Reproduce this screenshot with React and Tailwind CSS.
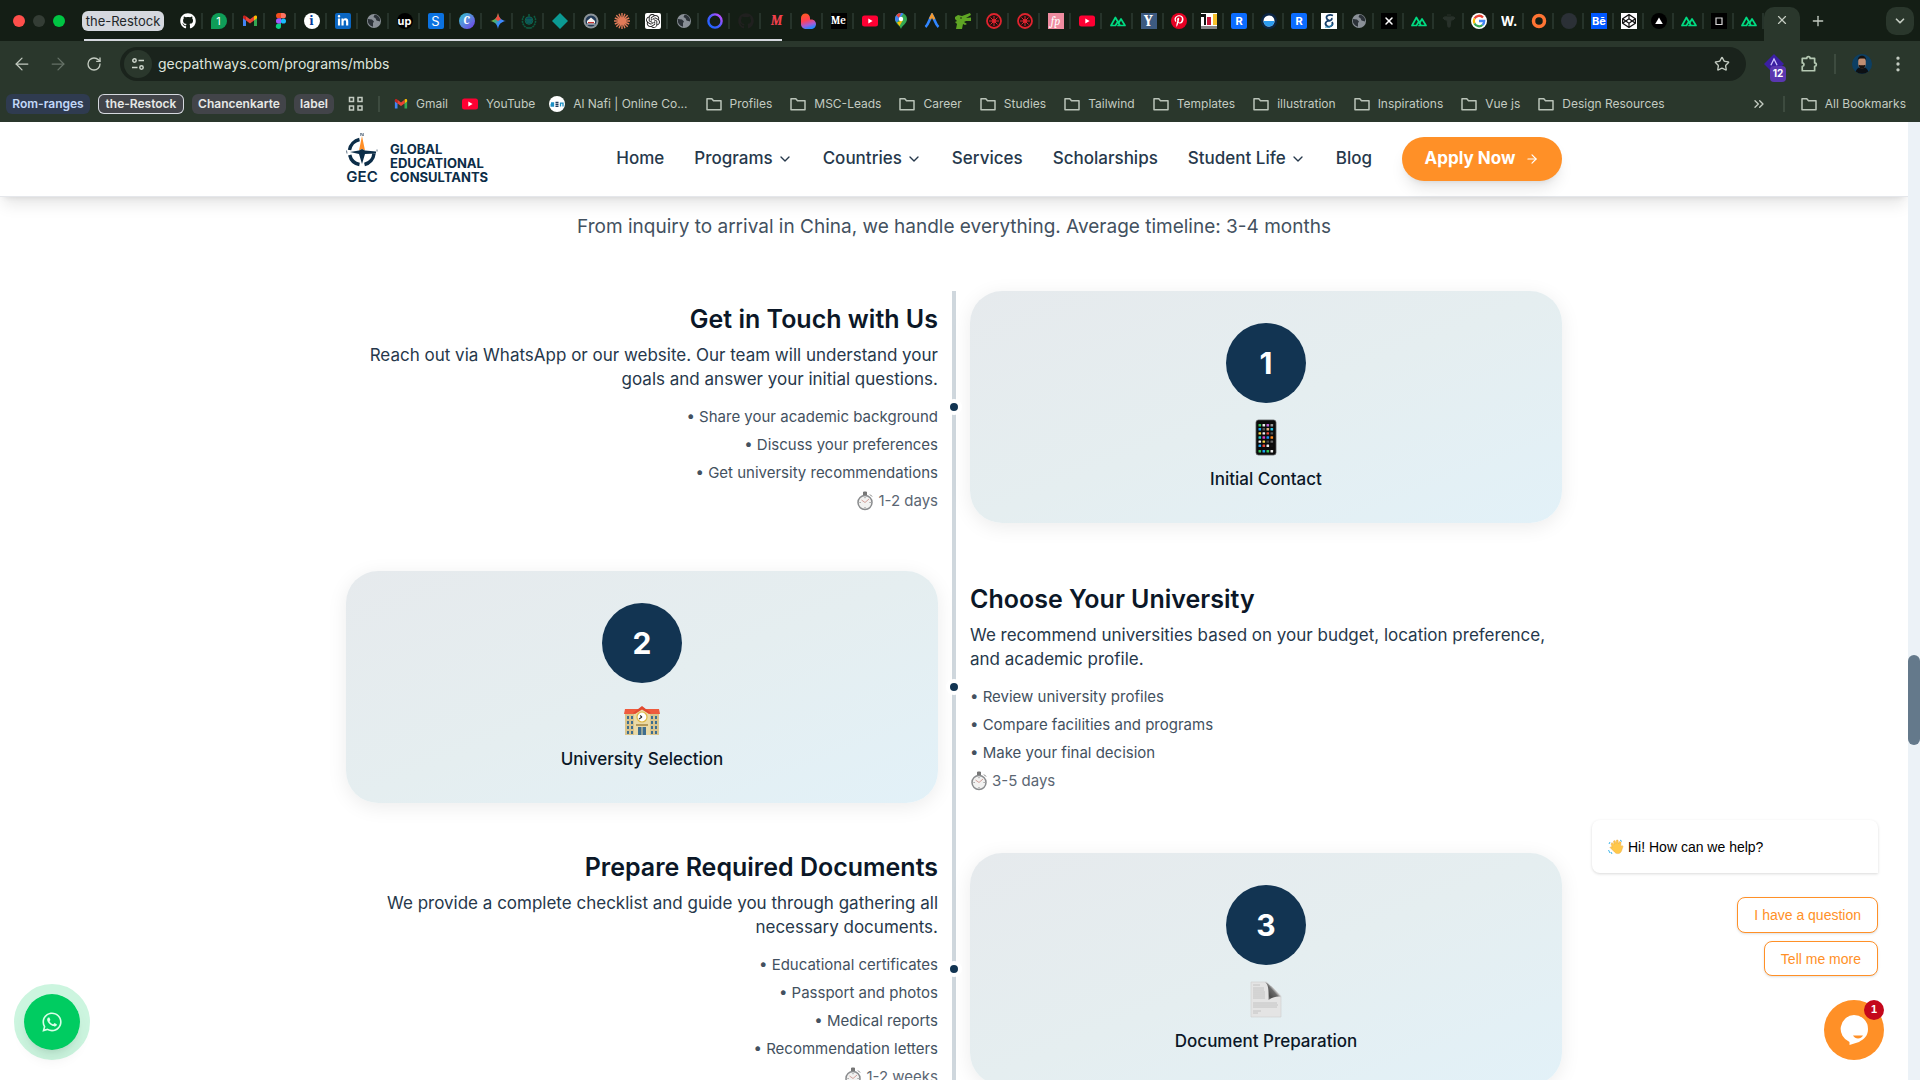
import React from "react";
import { FaGithub, FaLinkedinIn, FaPinterestP, FaCodepen, FaWhatsapp } from "react-icons/fa";
import { SiOpenai } from "react-icons/si";
import { ArrowLeft, ArrowRight, RotateCw, Star, ChevronDown, Plus, X, MoreVertical, ChevronsRight } from "lucide-react";

const Svg = ({ children, box = "0 0 16 16", className = "size-4" }) => (
  <svg viewBox={box} className={className} aria-hidden="true">{children}</svg>
);

/* A square or round favicon carrying one or two characters. */
const Mark = ({ className = "", children }) => (
  <span className={"flex size-4 items-center justify-center overflow-hidden text-[11px] leading-4 font-bold text-white " + className}>{children}</span>
);

const Gmail = ({ className }) => (
  <Svg className={className}>
    <path d="M1 3.5V13h3V7.2z" fill="#4285f4" />
    <path d="M15 3.5V13h-3V7.2z" fill="#34a853" />
    <path d="M1 3.6C1 2.5 2.4 2 3.3 2.7L4 3.2v4.2L1 5.2z" fill="#c5221f" />
    <path d="M15 3.6c0-1.1-1.4-1.6-2.3-.9l-.7.5v4.2l3-2.2z" fill="#fbbc04" />
    <path d="M4 3.2l4 3 4-3v4.2l-4 3-4-3z" fill="#ea4335" />
  </Svg>
);
const YouTube = () => (
  <Svg><rect y="2.5" width="16" height="11" rx="2.5" fill="#ff0033" /><path d="M6.3 5.6v4.8L10.6 8z" fill="#fff" /></Svg>
);
const Figma = () => (
  <Svg>
    <path d="M5.7 0H8v5.3H5.7a2.65 2.65 0 010-5.3z" fill="#f24e1e" />
    <path d="M8 0h2.3a2.65 2.65 0 010 5.3H8z" fill="#ff7262" />
    <path d="M5.7 5.3H8v5.4H5.7a2.7 2.7 0 010-5.4z" fill="#a259ff" />
    <circle cx="10.4" cy="8" r="2.6" fill="#1abcfe" />
    <path d="M5.7 10.7H8v2.6a2.6 2.6 0 11-2.3-2.6z" fill="#0acf83" />
  </Svg>
);
const Globe = () => (
  <Svg>
    <circle cx="8" cy="8" r="7" fill="#8a9097" />
    <path d="M2 6l4 .5 2 2-1 1.5v3.8A6.5 6.5 0 012 6zM8.5 1.8l-1 2.2 2 1.2 1 2.3 3.5 1V6c-.6-2.5-2.8-4.2-5.5-4.2z" fill="#2c3238" />
  </Svg>
);
const Nuxt = () => (
  <Svg><path d="M1 12.5h4.5L8 8.2M1 12.5L5.4 4.5 10 12.5H8M10 12.5h5L11 6 8.6 10" fill="none" stroke="#00dc82" strokeWidth="1.7" strokeLinejoin="round" strokeLinecap="round" /></Svg>
);
const Wheel = () => (
  <Svg>
    <circle cx="8" cy="8" r="7" fill="#23100f" stroke="#e0232e" strokeWidth="1.8" />
    <circle cx="8" cy="8" r="2" fill="#e0232e" />
    <path d="M8 3v10M3 8h10M4.5 4.5l7 7M11.5 4.5l-7 7" stroke="#e0232e" strokeWidth="1" />
  </Svg>
);
const Gemini = () => (
  <Svg>
    <defs><linearGradient id="gem" x1="0" x2="1" y1=".2" y2=".8"><stop stopColor="#f5b400" /><stop offset=".35" stopColor="#49b36b" /><stop offset=".6" stopColor="#3689ff" /><stop offset="1" stopColor="#5b8dff" /></linearGradient></defs>
    <path d="M8 0c.7 4.5 3 7.3 8 8-5 .7-7.3 3.5-8 8-.7-4.5-3-7.3-8-8 5-.7 7.3-3.5 8-8z" fill="url(#gem)" />
    <path d="M8 0c.5 3 1.5 5 3.2 6.3L8 8 5 6C6.9 4.7 7.6 2.7 8 0z" fill="#f04b3f" />
  </Svg>
);
const Wreath = () => (
  <Svg>
    <path d="M3 3C0 7 1.5 13 6 15M13 3c3 4 1.5 10-3 12" fill="none" stroke="#0d5a41" strokeWidth="1.6" strokeDasharray="2 .6" />
    <circle cx="8" cy="7.5" r="3.8" fill="#0c3d58" stroke="#0d6a4b" />
    <path d="M5 7h6M5.5 9h5M8 1v2M6 15h4" stroke="#0d7a57" />
  </Svg>
);
const Badge = () => (
  <Svg>
    <circle cx="8" cy="8" r="7.5" fill="#8c9499" /><circle cx="8" cy="8" r="5.5" fill="#223a57" />
    <path d="M4 8l4-3.5L12 8v2H4z" fill="#f4f1ee" /><path d="M5 9h6v1.5H5z" fill="#c2322f" /><path d="M4 11h8" stroke="#e6e6e6" />
  </Svg>
);
const Claude = () => (
  <Svg><path d="M8 0v16M0 8h16M2.3 2.3l11.4 11.4M13.7 2.3L2.3 13.7M5 .8l6 14.4M11 .8L5 15.2M.8 5l14.4 6M15.2 5L.8 11" stroke="#e07a58" strokeWidth="1.4" /></Svg>
);
const Ring = () => (
  <Svg>
    <defs><linearGradient id="ring" x1="0" y1="1" x2="1" y2="0"><stop stopColor="#1467ff" /><stop offset=".5" stopColor="#4b5bff" /><stop offset="1" stopColor="#d64bff" /></linearGradient></defs>
    <circle cx="8" cy="8" r="6.6" fill="none" stroke="url(#ring)" strokeWidth="2.4" />
  </Svg>
);
const Blob = () => (
  <Svg>
    <defs><linearGradient id="blob" x1=".2" y1="0" x2=".5" y2="1"><stop stopColor="#ff5a1f" /><stop offset=".45" stopColor="#ff4056" /><stop offset=".75" stopColor="#a55bd8" /><stop offset="1" stopColor="#2487ff" /></linearGradient></defs>
    <path d="M1 5a4.5 4.5 0 019 0v1.5c4-.7 6 2 6 4.5 0 3-2.3 5-5 5H6c-3 0-5-2.3-5-5z" fill="url(#blob)" />
  </Svg>
);
const Pin = () => (
  <Svg>
    <path d="M8 16C7 12.5 2 10.5 2 6a6 6 0 0112 0c0 4.5-5 6.5-6 10z" fill="#34a853" />
    <path d="M2 6a6 6 0 018.5-5.5L4 9.5C2.8 8.5 2 7.5 2 6z" fill="#4285f4" />
    <path d="M3.3 2.2A6 6 0 018 0L6 5z" fill="#ea4335" /><path d="M4 9.5L10 7l-3.5 6z" fill="#fbbc04" />
    <circle cx="8" cy="6" r="2.2" fill="#fff" />
  </Svg>
);
const Peak = () => (
  <Svg><path d="M1.5 14C4.5 11.5 5 7 8 2c3 5 3.5 9.5 6.5 12" fill="none" stroke="#3186ff" strokeWidth="2.6" /><path d="M6 6l2-4 2.2 4.3" fill="none" stroke="#f79a2c" strokeWidth="2.4" /></Svg>
);
const Dino = () => (
  <Svg><path d="M0 4l3-2 4 1 8-3 1 2-5 3 5-.5V8l-5 0L9 9l3 2-2 1-2-1-1 5H1l1-5-2-2 2-1-2-2z" fill="#5fa524" /><circle cx="6" cy="5" r=".8" fill="#17210f" /></Svg>
);
const Columns = () => (
  <Svg><path fill="#fff" d="M0 0h16v16H0z" /><path d="M0 1h5v11H3V4H0z" fill="#111" /><path d="M6 4h4v8H6z" fill="#c5163a" /><path d="M12 1h4v11h-4z" fill="#f8c12c" /><path d="M0 13h16v3H0z" fill="#87898b" /></Svg>
);
const Drop = () => (
  <Svg><circle cx="8" cy="8" r="8" fill="#0b2545" /><circle cx="8" cy="8" r="5.5" fill="#fff" /><path d="M2.5 8h11a5.5 5.5 0 01-11 0z" fill="#2c9cf0" /></Svg>
);
const Google = () => (
  <Svg>
    <circle cx="8" cy="8" r="8" fill="#fff" />
    <g fill="none" strokeWidth="2.3"><path d="M12 4.5A5.2 5.2 0 003.5 5.5" stroke="#ea4335" /><path d="M3.5 5.5a5.2 5.2 0 000 5" stroke="#fbbc05" /><path d="M3.5 10.5a5.2 5.2 0 008 1.5" stroke="#34a853" /><path d="M11.5 12A5.2 5.2 0 0013.2 8H8" stroke="#4285f4" /></g>
  </Svg>
);
const Curl = () => (
  <Svg><path fill="#fff" d="M0 0h16v16H0z" /><path d="M12 2.5C8 1 4 3 6 6s6 1 4.5-1M9 8c-4-1-6 3-3 5s7-1 5-4" fill="none" stroke="#17406b" strokeWidth="1.8" /><path d="M4 14c4 1 7-1 7-3" stroke="#2594c4" fill="none" /></Svg>
);
const Faint = () => (
  <Svg><path d="M2 5c2-2 3-1 6-1s4-1 6 1c-1 2-3 2-4 2l-1 7H7L6 7C5 7 3 7 2 5zM6 2h4" fill="#28312a" stroke="#28312a" /></Svg>
);
const AlNafi = () => (
  <Svg><circle cx="8" cy="8" r="8" fill="#fff" /><g fill="none" stroke="#1c8fc4" strokeWidth="1.3"><path d="M2 7h2.5v3H2.2V8.5h2M11.5 10.5V7.2H14v3.3" /><path d="M6.5 6.5h3M6.5 8.5h3M6.5 10.3h3" stroke="#203a5c" /></g></Svg>
);
const Chat1 = () => (
  <span className="flex size-4 items-center justify-center rounded-full rounded-bl-xs bg-[#0f9d58] text-[11px] leading-4 text-white">1</span>
);

const groupTabs = [
  <FaGithub className="size-4 text-white" />, <Chat1 />, <Gmail />, <Figma />,
  <Mark className="rounded-full bg-white font-serif text-[14px] !text-[#003a9b]">i</Mark>,
  <Mark className="rounded-xs bg-[#0a66c2]"><FaLinkedinIn className="size-3" /></Mark>,
  <Globe />,
  <Mark className="rounded-full bg-black text-[9px]">up</Mark>,
  <Mark className="rounded-xs bg-[#0b72e0] text-[13px] !font-normal">S</Mark>,
  <Mark className="rounded-full bg-linear-to-br from-[#00c4cc] to-[#6d2ae8] font-serif italic">C</Mark>,
  <Gemini />, <Wreath />,
  <Svg><path d="M8 0l8 8-8 8-8-8z" fill="#0b9a93" /></Svg>,
  <Badge />, <Claude />,
  <Mark className="rounded-xs bg-white"><SiOpenai className="size-3.5 text-[#222]" /></Mark>,
  <Globe />, <Ring />, <FaGithub className="size-4 text-[#20201f]" />,
  <Mark className="font-serif text-[14px] italic !text-[#f0404c]">M</Mark>,
];
const looseTabs = [
  <Blob />,
  <Mark className="bg-black font-serif">Me</Mark>,
  <YouTube />, <Pin />, <Peak />, <Dino />, <Wheel />, <Wheel />,
  <Mark className="bg-[#f08ca0] font-serif text-[12px] italic !font-normal">fp</Mark>,
  <YouTube />, <Nuxt />,
  <Mark className="bg-[#3c5a80] font-serif text-[15px]">Y</Mark>,
];
const narrowTabs = [
  <Mark className="rounded-full bg-[#e60023]"><FaPinterestP className="size-3" /></Mark>,
  <Columns />,
  <Mark className="rounded-xs bg-[#0b6cff]">R</Mark>,
  <Drop />,
  <Mark className="rounded-xs bg-[#0b6cff]">R</Mark>,
  <Curl />, <Globe />,
  <Mark className="bg-black"><X className="size-3" strokeWidth={3} /></Mark>,
  <Nuxt />, <Faint />, <Google />,
  <Mark className="text-[13px]">W.</Mark>,
  <Svg><circle cx="8" cy="8" r="5.5" fill="none" stroke="#ff7433" strokeWidth="3.5" /></Svg>,
  <Svg><circle cx="8" cy="8" r="8" fill="#2b3036" /></Svg>,
  <Mark className="bg-[#0057ff] text-[9px]">Bē</Mark>,
  <Mark className="bg-white"><FaCodepen className="size-3.5 text-[#111]" /></Mark>,
  <Svg><circle cx="8" cy="8" r="8" fill="#000" /><path d="M8 4.5l3.8 6.5H4.2z" fill="#fff" /></Svg>,
  <Nuxt />,
  <Svg><path fill="#000" d="M0 0h16v16H0z" /><path d="M5 5h6v6.5H5z" fill="none" stroke="#d8d8d8" strokeWidth="1.2" /></Svg>,
  <Nuxt />,
];

const Tab = ({ children, className }) => (
  <div className={"relative flex h-4 items-center justify-center " + className}>
    {children}
    <span className="absolute right-0 h-4 w-0.5 bg-[#26332a]" />
  </div>
);

const Folder = () => (
  <Svg className="size-4 shrink-0"><path d="M1 2.7h4.8l1.7 2H15v9H1z" fill="none" stroke="#b9c3b8" strokeWidth="1.5" strokeLinejoin="round" /></Svg>
);
const folders = ["Profiles", "MSC-Leads", "Career", "Studies", "Tailwind", "Templates", "illustration", "Inspirations", "Vue js", "Design Resources"];

const Bookmark = ({ icon, children }) => (
  <a href="#" className="flex shrink-0 items-center gap-2">{icon}<span>{children}</span></a>
);

const Browser = () => (
  <div className="shrink-0 bg-[#2a372c] font-['Inter',sans-serif] text-xs text-[#c3cbc1]">
    <div className="flex h-[41px] items-center bg-[#141e15] pr-1.5">
      <div className="flex w-[82px] gap-2 pl-[13px]">
        <span className="size-3 rounded-full bg-[#ff4f4b]" />
        <span className="size-3 rounded-full bg-[#343d35]" />
        <span className="size-3 rounded-full bg-[#00c543]" />
      </div>
      <div className="flex h-full flex-col justify-between">
        <div className="flex items-center pt-[11px]">
          <button className="h-5 w-[82px] rounded-md bg-[#d5d8de] text-[13px] leading-5 text-[#232628]">the-Restock</button>
          <div className="ml-2 flex">{groupTabs.map((t, i) => <Tab key={i} className="w-[31px]">{t}</Tab>)}</div>
        </div>
        <div className="mr-2.5 ml-0.5 h-0.5 bg-[#d5d8de]" />
      </div>
      <div className="flex">{looseTabs.map((t, i) => <Tab key={i} className="w-[31px]">{t}</Tab>)}</div>
      <div className="flex">{narrowTabs.map((t, i) => <Tab key={i} className="w-[30px]">{t}</Tab>)}</div>
      <div className="flex h-[34px] w-9 items-center justify-center self-end rounded-t-[10px] bg-[#2a372c] pb-2">
        <button aria-label="Close tab"><X className="size-3.5" /></button>
      </div>
      <button aria-label="New tab" className="ml-2.5"><Plus className="size-4" /></button>
      <button aria-label="Search tabs" className="ml-auto flex size-7 items-center justify-center rounded-[10px] bg-[#2a372c]"><ChevronDown className="size-3.5" strokeWidth={3} /></button>
    </div>
    <div className="flex h-[46px] items-center pr-3 pl-3">
      <button aria-label="Back" className="mr-4 flex"><ArrowLeft className="size-5" strokeWidth={1.5} /></button>
      <button aria-label="Forward" className="mr-[18px] flex text-[#667267]"><ArrowRight className="size-5" strokeWidth={1.5} /></button>
      <button aria-label="Reload" className="mr-[18px] flex"><RotateCw className="size-4" /></button>
      <div className="flex h-[34px] flex-1 items-center rounded-full bg-[#1a231c] pr-4 pl-1">
        <span className="mr-1.5 flex size-7 items-center justify-center rounded-full bg-[#2a372c]">
          <Svg><g fill="none" stroke="#cdd5cb" strokeWidth="1.5"><circle cx="4.5" cy="4.5" r="1.7" /><path d="M8.5 4.5H14M2 11.5h5.5" /><circle cx="11.5" cy="11.5" r="1.7" /></g></Svg>
        </span>
        <input aria-label="Address" defaultValue="gecpathways.com/programs/mbbs" className="min-w-0 flex-1 bg-transparent text-sm text-[#dfe5dc] outline-none" />
        <button aria-label="Bookmark this page"><Star className="size-4" /></button>
      </div>
      <div className="relative ml-[18px] size-5">
        <Svg className="size-5"><path d="M8 0l8 8-8 8-8-8z" fill="#3b1fa3" /><path d="M5.5 9L8 4l2.5 5" stroke="#cfc4ff" fill="none" /></Svg>
        <span className="absolute top-3 left-1.5 flex size-4 items-center justify-center rounded-sm bg-[#5a37b0] text-[10px] font-bold text-white">12</span>
      </div>
      <button aria-label="Extensions" className="ml-4">
        <Svg className="size-[18px]"><path d="M2 3h4a1.5 1.5 0 013 0h4v4a1.5 1.5 0 010 3v4H2v-4a1.5 1.5 0 000-3z" fill="none" stroke="#b5c9b3" strokeWidth="1.5" strokeLinejoin="round" /></Svg>
      </button>
      <span className="ml-4 h-5 w-0.5 bg-[#3d4b3f]" />
      <Svg className="ml-4 size-5"><circle cx="8" cy="8" r="8" fill="#0d3f63" /><path d="M3 14c1-3 3-3.5 5-3.5s4 .5 5 3.5a8 8 0 01-10 0z" fill="#0c1014" /><path d="M5 5.5c0-5 6-5 6 0v3c-.5 4-5.5 4-6 0z" fill="#c08e72" /><path d="M4.6 5.5c-.5-5.5 7.3-5.5 6.8 0-.5-2-1.4-2-3.4-2s-2.9 0-3.4 2zM5.2 8.5c.8 4.5 4.8 4.5 5.6 0L9.5 9h-3z" fill="#16110f" /></Svg>
      <button aria-label="Menu" className="ml-4 flex"><MoreVertical className="size-5" /></button>
    </div>
    <div className="flex h-[35px] items-center pr-3.5 pb-0.5 pl-1.5">
      <div className="flex gap-2 text-xs leading-5 font-semibold text-[#e6e8e6]">
        <button className="h-5 w-[84px] rounded-md bg-[#2f3b50] text-[#c2d8f8]">Rom-ranges</button>
        <button className="h-5 w-[86px] rounded-md bg-[#424449] ring-1 ring-[#d5d8de] ring-inset">the-Restock</button>
        <button className="h-5 w-[94px] rounded-md bg-[#424449]">Chancenkarte</button>
        <button className="h-5 w-10 rounded-md bg-[#424449]">label</button>
      </div>
      <Svg className="ml-3.5 size-4"><g fill="none" stroke="#c3cbc1" strokeWidth="1.5"><path d="M1.5 1.5h4v4h-4zM10 1.5h4v4h-4zM1.5 10h4v4h-4zM10 10h4v4h-4z" /></g></Svg>
      <span className="mx-3.5 h-4 w-0.5 bg-[#3d4b3f]" />
      <div className="flex gap-3.5">
        <Bookmark icon={<Gmail className="size-3.5" />}>Gmail</Bookmark>
        <Bookmark icon={<YouTube />}>YouTube</Bookmark>
        <Bookmark icon={<AlNafi />}>Al Nafi | Online Co...</Bookmark>
      </div>
      <div className="ml-[18px] flex flex-1 gap-[18px]">
        {folders.map((f) => <Bookmark key={f} icon={<Folder />}>{f}</Bookmark>)}
      </div>
      <ChevronsRight className="size-4" />
      <span className="mx-4 h-4 w-0.5 bg-[#3d4b3f]" />
      <Bookmark icon={<Folder />}>All Bookmarks</Bookmark>
    </div>
  </div>
);

const Logo = () => (
  <a href="#" className="flex items-end gap-3 pb-0.5 text-[#0c2d48]">
    <span className="flex w-8 flex-col items-center">
      <svg viewBox="0 0 32 36" className="h-9 w-8" aria-hidden="true">
        <path d="M13.5 6.5A13 13 0 003.5 17M3.7 22A12.5 12.5 0 0013.5 31.5M18.5 31.5A12.5 12.5 0 0028 20.5" fill="none" stroke="#0c2d48" strokeWidth="3.4" />
        <path d="M16 3l3 14.5-3-1.5-3 1.5z" fill="#ff8f27" />
        <path d="M4 19l9-1.5 3-1.5 3 1.5L30 18.5v2L19 21l-3 10-3-10z" fill="#0c2d48" />
        <path d="M14.8 3V0l2.4 3V0M.5 17.5l.5 3M31 16.5v2" stroke="#52677a" strokeWidth=".9" fill="none" />
      </svg>
      <span className="text-[15px] leading-[15px] font-semibold">GEC</span>
    </span>
    <span className="text-[13px] leading-[14px] font-bold">GLOBAL<br />EDUCATIONAL<br />CONSULTANTS</span>
  </a>
);

const NavLink = ({ children, menu }) => (
  <a href="#" className="flex items-center gap-1 whitespace-nowrap">{children}{menu && <ChevronDown className="size-4" />}</a>
);

const Header = () => (
  <header className="relative z-10 border-b border-gray-200 bg-white shadow-lg">
    <div className="mx-auto flex h-[74px] max-w-7xl items-center justify-between px-8">
      <Logo />
      <nav className="flex items-center gap-[30px] text-[17px] font-medium text-[#26384b]">
        <NavLink>Home</NavLink>
        <NavLink menu>Programs</NavLink>
        <NavLink menu>Countries</NavLink>
        <NavLink>Services</NavLink>
        <NavLink>Scholarships</NavLink>
        <NavLink menu>Student Life</NavLink>
        <NavLink>Blog</NavLink>
        <a href="#" className="flex h-11 w-40 items-center justify-center gap-2.5 rounded-full bg-[#ff9027] font-bold text-white shadow-lg">Apply Now <ArrowRight className="size-3.5" /></a>
      </nav>
    </div>
  </header>
);

const Stopwatch = () => (
  <Svg box="0 0 18 20" className="h-5 w-[18px]">
    <path d="M7.5 1h3v3h-3zM14 3.5l2 2" fill="#777" stroke="#777" strokeWidth="1" />
    <circle cx="9" cy="11.5" r="7" fill="#f2f2f1" stroke="#8a8c8e" strokeWidth="1.5" />
    <path d="M9 11.5L5.5 9M9 11.5L13 8" stroke="#c98a83" strokeWidth=".8" />
    <path d="M9 6v1.2M9 16v1.2M3.5 11.5h1.2M13.5 11.5h1.2" stroke="#777" strokeWidth=".8" />
  </Svg>
);

const phoneColors = ["#35c759", "#eee", "#c065d8", "#999", "#1da1f2", "#555", "#e0b080", "#28c7e8", "#f5d547", "#eee", "#e94b3c", "#555", "#28c7c8", "#d83bc0", "#1d8df2", "#ff8a1e", "#eee", "#f5d547", "#444", "#666", "#1da1f2", "#e94b3c", "#eee", "#111"];
const Phone = () => (
  <Svg box="0 0 36 40" className="h-10 w-9">
    <rect x="8" y="1" width="20" height="35" rx="2.5" fill="#0b0b0b" stroke="#55585a" strokeWidth=".8" />
    {phoneColors.map((c, i) => <rect key={i} x={10.5 + (i % 4) * 4} y={5 + Math.floor(i / 4) * 4.1} width="2.6" height="2.4" rx=".5" fill={c} />)}
    {["#35c759", "#1da1f2", "#35c759", "#eee"].map((c, i) => <rect key={i} x={10.5 + i * 4} y="31" width="2.6" height="2.4" rx=".5" fill={c} />)}
  </Svg>
);
const School = () => (
  <Svg box="0 0 36 40" className="h-10 w-9">
    <path d="M1 13h34v23H1z" fill="#d9c48c" />
    <path d="M1 10h34l1 5H0z" fill="#ef5b3d" />
    <path d="M10 15l8-6 8 6v21H10z" fill="#eadaa6" />
    <path d="M9 14l9-7 9 7-2 1-7-4.5-7 4.5z" fill="#e24a30" />
    <circle cx="18" cy="18" r="5" fill="#fff" stroke="#dfb742" strokeWidth="1.2" />
    <path d="M18 18l-3 2M18 18l-2-1.5" stroke="#333" strokeWidth="1.1" />
    <g fill="#3f6e8f"><path d="M3 17h2v3H3zM7 17h2v3H7zM3 22h2v3H3zM7 22h2v3H7zM3 27h2v3H3zM7 27h2v3H7zM3 32h2v3H3zM7 32h2v3H7zM27 17h2v3h-2zM31 17h2v3h-2zM27 22h2v3h-2zM31 22h2v3h-2zM27 27h2v3h-2zM31 27h2v3h-2zM27 32h2v3h-2zM31 32h2v3h-2zM14 28h3.5v8H14zM18.5 28H22v8h-3.5z" /></g>
    <path d="M12 25h12v2H12z" fill="#b59a5a" />
  </Svg>
);
const Paper = () => (
  <Svg box="0 0 36 40" className="h-10 w-9">
    <defs><linearGradient id="fold" x1="0" y1="1" x2="1" y2="0"><stop stopColor="#b8b8b8" /><stop offset=".25" stopColor="#4c4c4c" /><stop offset=".5" stopColor="#6a6a6a" /><stop offset=".62" stopColor="#e4e4e4" /><stop offset="1" stopColor="#f4f4f4" /></linearGradient></defs>
    <path d="M3 1h15c2 0 4 4 5 10 6 0 10 2 10 5v20H3z" fill="#e4e4e4" stroke="#cfcfcf" strokeWidth=".6" />
    <path d="M5 4h7M5 7h11M5 9h11M5 11h12M5 13h12M5 15h12M5 17h12M5 22h24M5 24h25M5 26h24M5 30h8M5 32h5" stroke="#c0c0c0" strokeWidth=".9" />
    <path d="M17 1c3 2 4 7 3.500 18 3-3 12.500-5 12.500-2C33 13 22 3 17 1z" fill="url(#fold)" />
  </Svg>
);

const steps = [
  { n: 1, art: <Phone />, label: "Initial Contact", title: "Get in Touch with Us", text: "Reach out via WhatsApp or our website. Our team will understand your goals and answer your initial questions.", items: ["Share your academic background", "Discuss your preferences", "Get university recommendations"], time: "1-2 days" },
  { n: 2, art: <School />, label: "University Selection", title: "Choose Your University", text: "We recommend universities based on your budget, location preference, and academic profile.", items: ["Review university profiles", "Compare facilities and programs", "Make your final decision"], time: "3-5 days" },
  { n: 3, art: <Paper />, label: "Document Preparation", title: "Prepare Required Documents", text: "We provide a complete checklist and guide you through gathering all necessary documents.", items: ["Educational certificates", "Passport and photos", "Medical reports", "Recommendation letters"], time: "1-2 weeks" },
];

const Step = ({ step }) => {
  const textFirst = step.n % 2 === 1;
  return (
    <li className="relative grid grid-cols-2 items-center gap-8">
      <div className={textFirst ? "text-right" : "order-2"}>
        <h3 className="mb-2 text-[25px] leading-8 font-semibold text-[#0b1727]">{step.title}</h3>
        <p className="mb-4 text-[17px] leading-6 text-[#26384b]">{step.text}</p>
        <ul className="mb-2 space-y-2 text-[15px] leading-5 text-[#435160]">
          {step.items.map((it) => <li key={it}>• {it}</li>)}
        </ul>
        <p className={"flex items-center gap-1 text-[15px] leading-5 text-[#5b6673] " + (textFirst ? "justify-end" : "")}><Stopwatch />{step.time}</p>
      </div>
      <div className={"flex flex-col items-center rounded-4xl bg-linear-to-br from-[#e6eaed] via-[#e5eef0] to-[#e2f1f8] p-8 shadow-[0_4px_20px_rgba(0,0,0,0.08)] " + (textFirst ? "" : "order-1")}>
        <span className="mb-4 flex size-20 items-center justify-center rounded-full bg-[#123452] text-3xl font-bold text-white">{step.n}</span>
        <div className="mb-2">{step.art}</div>
        <h4 className="text-[17px] leading-6 font-medium text-[#0b1727]">{step.label}</h4>
      </div>
      <span className="absolute top-1/2 left-1/2 size-4 -translate-1/2 rounded-full border-4 border-white bg-[#123452]" />
    </li>
  );
};

const ChatWidget = () => (
  <aside className="absolute right-6 bottom-5 flex flex-col items-end font-['Liberation_Sans',sans-serif] text-sm">
    <div className="mr-1.5 flex h-[53px] w-[286px] items-center gap-1 rounded-lg rounded-br-none bg-white pl-4 text-black shadow-[0_1px_3px_rgba(0,0,0,0.15)]">
      <Svg>
        <path d="M3 5l1-1.5 2 2L5.5 2l1.500-.5 1 3L8.5 1 10 1l.5 4 1-2.500 1.500.5-.3 4.500 1.500-1 .8 1-1.500 4.500c-1 3-5 3.500-7 1L2 8.500 3 7.500 4.500 8.500z" fill="#ffc84a" stroke="#e9a53a" strokeWidth=".4" />
        <path d="M1 5l1-2M12 1l2 1.5M.5 11l1.5 3M3 13l1 2" stroke="#3fb5ea" fill="none" />
      </Svg>
      <span>Hi! How can we help?</span>
    </div>
    <button className="mt-6 mr-1.5 h-9 rounded-lg border border-[#ff9027] bg-white px-4 text-[#ff9027] shadow-sm">I have a question</button>
    <button className="mt-2 mr-1.5 h-[35px] rounded-lg border border-[#ff9027] bg-white px-4 text-[#ff9027] shadow-sm">Tell me more</button>
    <button aria-label="Open chat" className="relative mt-6 flex size-[60px] items-center justify-center rounded-full bg-[#ff9027]">
      <Svg box="0 0 30 32" className="h-8 w-[30px]">
        <path d="M15 1a14 14 0 0114 14c0 7-4 10-9 13l-9.5 3v-3A14 14 0 0115 1z" fill="#fff" />
        <path d="M14 21.5h10c-2 4-8 4-10 0z" fill="#ff9027" />
      </Svg>
      <span className="absolute top-0 right-0 flex size-5 items-center justify-center rounded-full bg-[#c4071b] text-[11px] font-bold text-white">1</span>
    </button>
  </aside>
);

export default function App() {
  return (
    <div className="flex h-screen flex-col overflow-hidden bg-white font-['Inter',sans-serif]">
      <Browser />
      <div className="flex min-h-0 flex-1">
        <div className="relative min-w-0 flex-1 overflow-hidden">
          <Header />
          <main className="mx-auto max-w-7xl px-8 pt-4">
            <p className="mb-[50px] text-center text-[19px] leading-7 text-[#435160]">From inquiry to arrival in China, we handle everything. Average timeline: 3-4 months</p>
            <div className="relative">
              <span className="absolute inset-y-0 left-1/2 w-1 -translate-x-1/2 bg-[#cfd7dd]" />
              <ol className="space-y-12">{steps.map((s) => <Step key={s.n} step={s} />)}</ol>
            </div>
          </main>
          <a href="#" aria-label="Chat on WhatsApp" className="absolute bottom-[30px] left-6 flex size-14 items-center justify-center rounded-full bg-[#00cc61] text-[#d9ffe8] shadow-lg outline-10 outline-[#00cc61]/20">
            <FaWhatsapp className="size-[22px]" />
          </a>
          <ChatWidget />
        </div>
        <div className="w-3 bg-[#ecf2f7]">
          <div className="mt-[533px] h-[90px] rounded-full bg-[#64798b]" />
        </div>
      </div>
    </div>
  );
}
